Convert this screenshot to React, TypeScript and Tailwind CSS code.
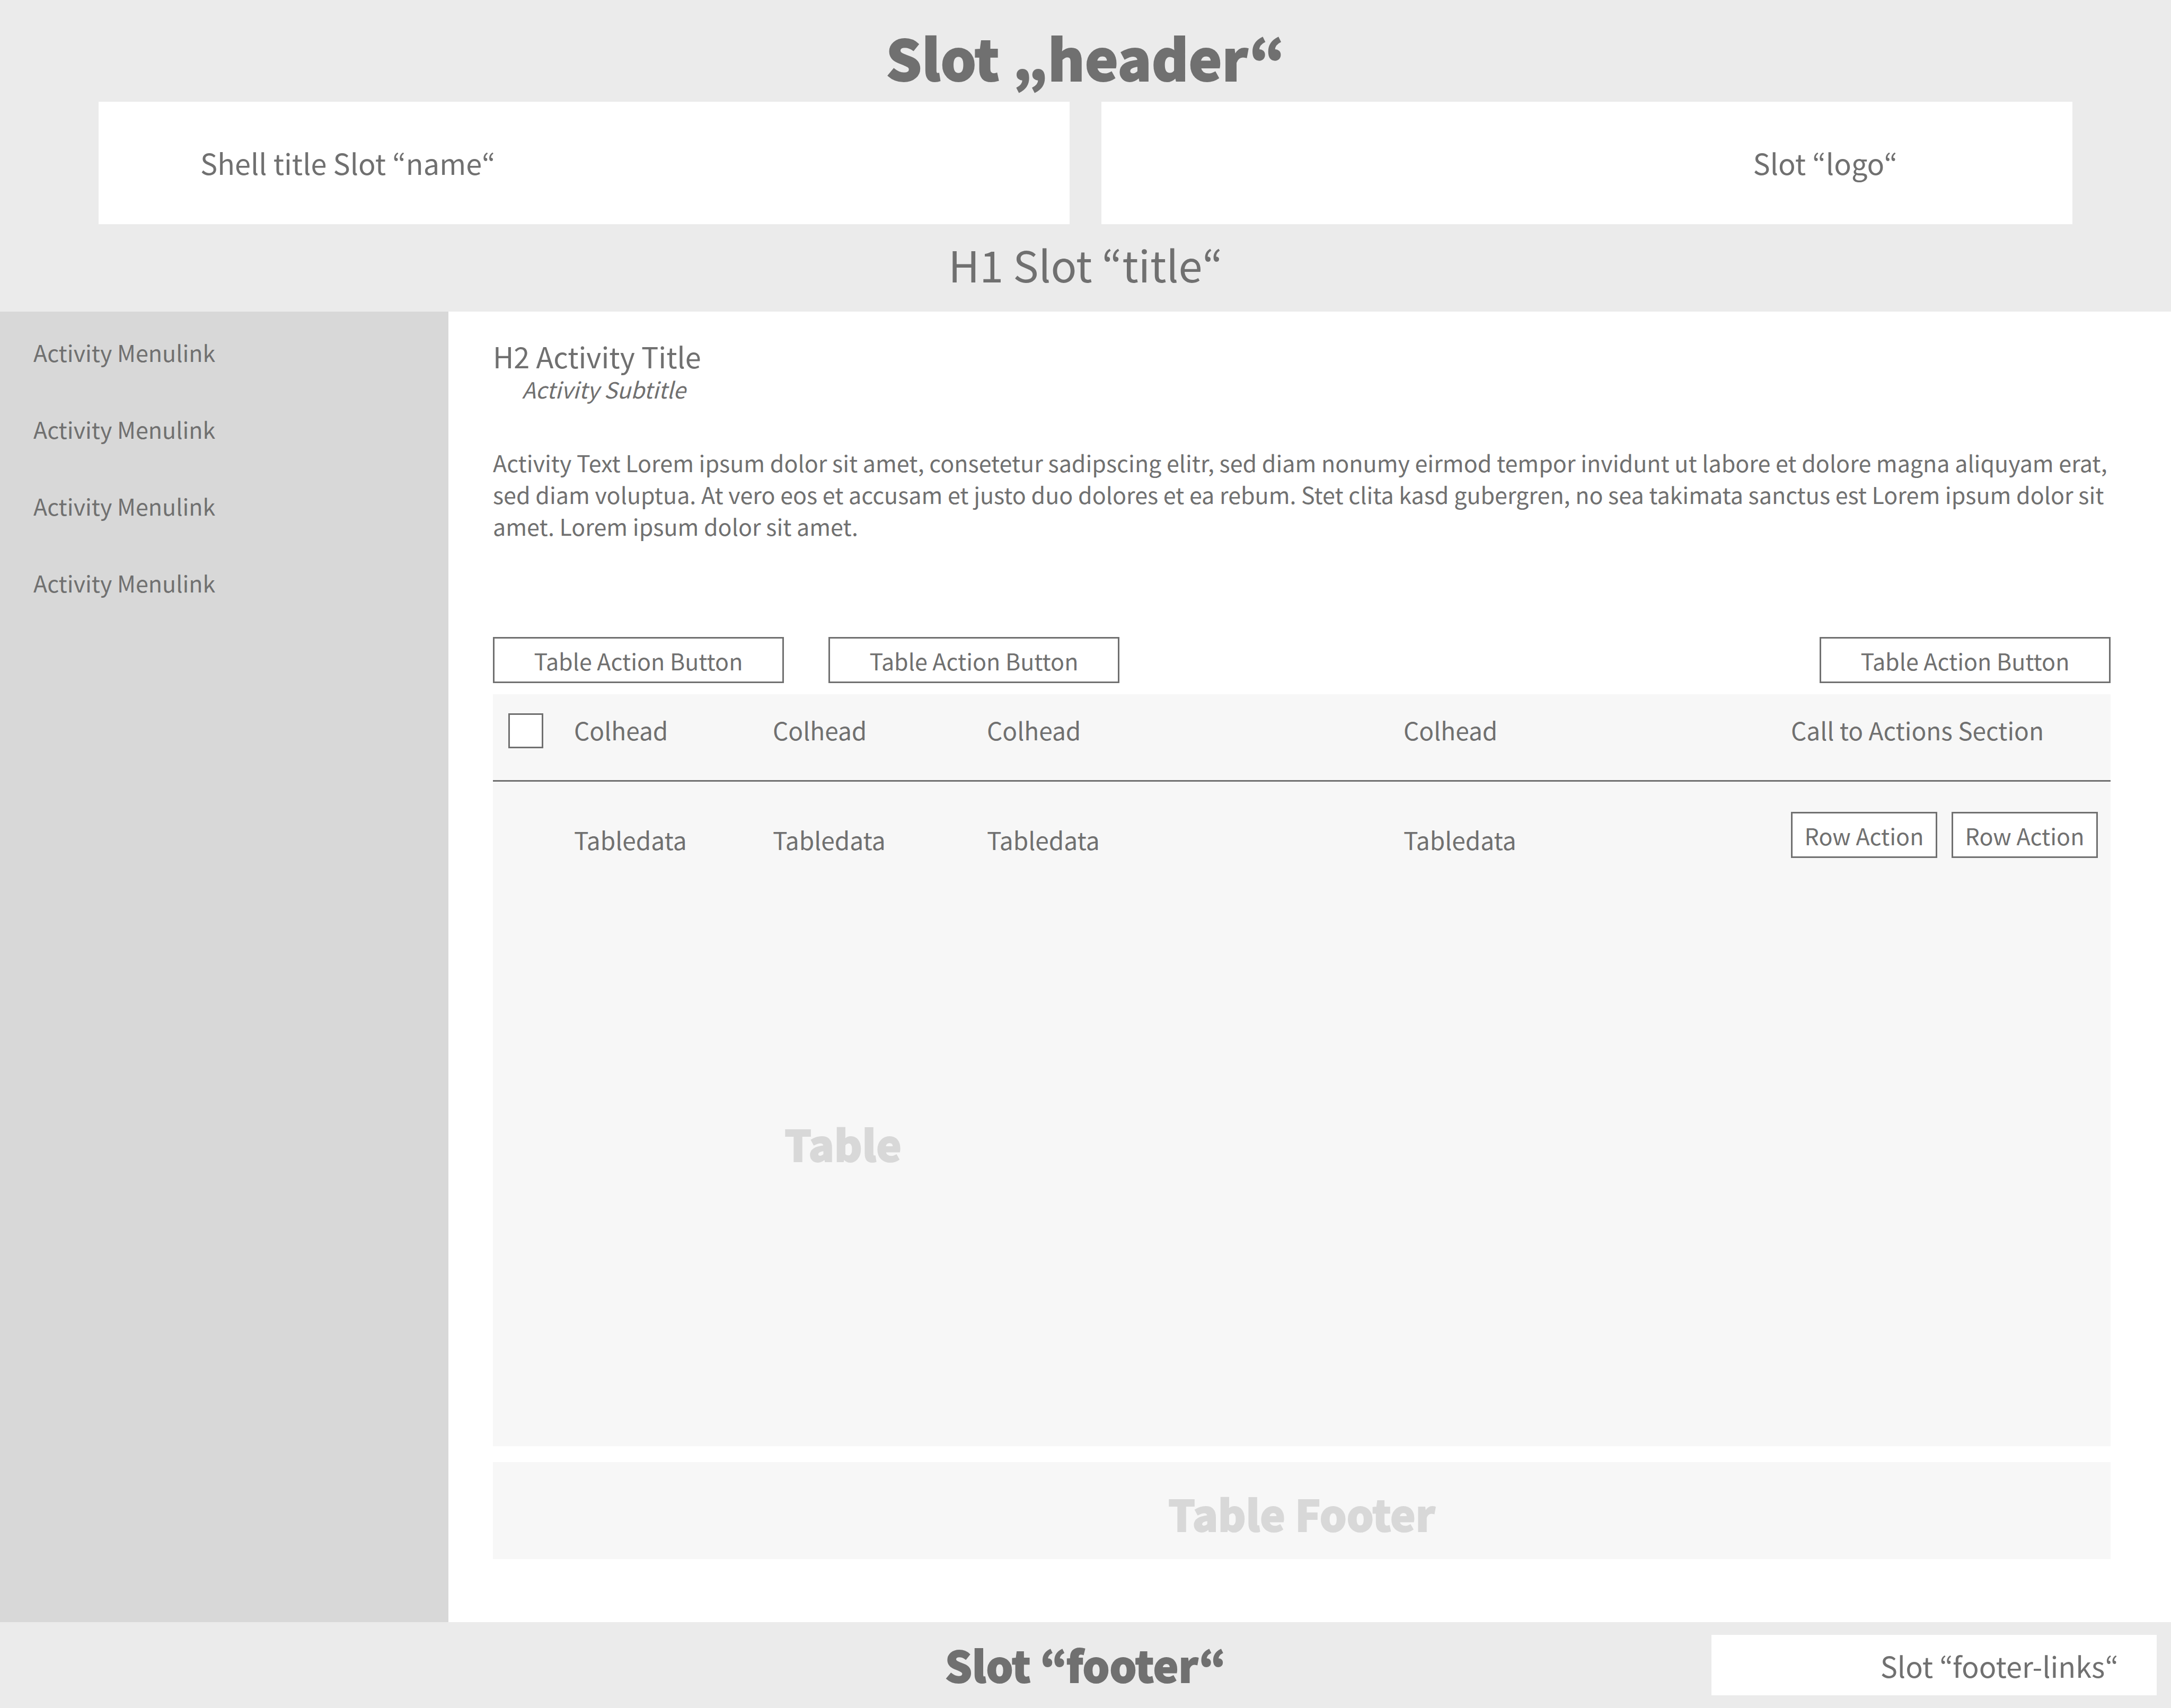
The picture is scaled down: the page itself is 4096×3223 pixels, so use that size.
const field = "border-[3px] border-[#707070] bg-white";

function ActionButton() {
  return (
    <button type="button" className={`${field} h-[87px] w-[549px] pt-[2px] text-[43px] leading-[79px]`}>
      Table Action Button
    </button>
  );
}

function RowButton() {
  return (
    <button type="button" className={`${field} h-[87px] w-[276px] pt-[2px] text-[43px] leading-[79px]`}>
      Row Action
    </button>
  );
}

const links = [1, 2, 3, 4];
const columns = [1, 2, 3, 4];
const headCell = "border-b-[3px] border-[#707070] pt-[27px] font-normal";
const heavy = "font-black [-webkit-text-stroke:2px_currentColor]";

export default function App() {
  return (
    <div className="flex min-h-screen flex-col bg-white font-['Noto_Sans_CJK_KR','Noto_Sans',sans-serif] text-[#707070]">
      <header className="flex flex-col items-center bg-[#ebebeb] px-[186px]">
        <p className={`${heavy} h-[192px] pt-[19px] text-[106px] leading-[176px]`}>Slot „header“</p>
        <div className="grid w-full grid-cols-2 gap-[60px]">
          <div className="h-[231px] bg-white px-[192px] text-[54px] leading-[229px]">Shell title Slot “name“</div>
          <div className="h-[231px] bg-white px-[330px] text-right text-[54px] leading-[229px]">Slot “logo“</div>
        </div>
        <h1 className="h-[165px] text-[81px] leading-[150px]">H1 Slot “title“</h1>
      </header>
      <div className="flex flex-1">
        <nav className="flex w-[846px] shrink-0 flex-col gap-[65px] bg-[#d8d8d8] px-[63px] pt-[36px] text-[43px] leading-[80px]">
          {links.map((n) => (
            <a key={n} href="#activity">Activity Menulink</a>
          ))}
        </nav>
        <main className="min-w-0 flex-1 pt-[44px] pr-[114px] pb-[100px] pl-[84px]">
          <h2 className="text-[54px] leading-[80px]">H2 Activity Title</h2>
          <p className="pl-[55px] text-[42px] leading-[44px] italic">Activity Subtitle</p>
          <p className="pt-[86px] text-[43px] leading-[60px]">
            Activity Text Lorem ipsum dolor sit amet, consetetur sadipscing elitr, sed diam nonumy eirmod tempor invidunt ut
            labore et dolore magna aliquyam erat, sed diam voluptua. At vero eos et accusam et justo duo dolores et ea rebum.
            Stet clita kasd gubergren, no sea takimata sanctus est Lorem ipsum dolor sit amet. Lorem ipsum dolor sit amet.
          </p>
          <div className="mt-[180px] flex gap-[84px]">
            <ActionButton />
            <ActionButton />
            <div className="ml-auto flex">
              <ActionButton />
            </div>
          </div>
          <div className="mt-[21px] h-[1419px] bg-[#f7f7f7]">
            <table className="w-full table-fixed border-separate border-spacing-0 text-left text-[46px] leading-[80px]">
              <colgroup>
                <col className="w-[153px]" />
                <col className="w-[375px]" />
                <col className="w-[404px]" />
                <col className="w-[786px]" />
                <col />
                <col className="w-[603px]" />
              </colgroup>
              <thead>
                <tr className="h-[165px] align-top">
                  <th className="border-b-[3px] border-[#707070] pt-[36px] pl-[29px]">
                    <input type="checkbox" aria-label="Select all rows" className={`${field} block size-[66px] appearance-none`} />
                  </th>
                  {columns.map((n) => (
                    <th key={n} className={headCell}>Colhead</th>
                  ))}
                  <th className={headCell}>Call to Actions Section</th>
                </tr>
              </thead>
              <tbody>
                <tr className="align-top">
                  <td />
                  {columns.map((n) => (
                    <td key={n} className="pt-[69px]">Tabledata</td>
                  ))}
                  <td className="pt-[57px]">
                    <div className="flex gap-[27px]">
                      <RowButton />
                      <RowButton />
                    </div>
                  </td>
                </tr>
              </tbody>
            </table>
            <p className={`${heavy} pt-[473px] pl-[550px] text-[80px] leading-[120px] text-[#d8d8d8]`}>Table</p>
          </div>
          <div className={`${heavy} mt-[30px] h-[183px] bg-[#f7f7f7] pt-[10px] text-center text-[80px] leading-[173px] text-[#d8d8d8]`}>
            Table Footer
          </div>
        </main>
      </div>
      <footer className="grid h-[162px] grid-cols-[1fr_auto_1fr] items-center bg-[#ebebeb] px-[27px]">
        <span />
        <p className={`${heavy} self-start text-[80px] leading-[158px]`}>Slot “footer“</p>
        <div className="h-[114px] w-[840px] justify-self-end bg-white px-[72px] text-right text-[54px] leading-[115px]">
          Slot “footer-links“
        </div>
      </footer>
    </div>
  );
}
